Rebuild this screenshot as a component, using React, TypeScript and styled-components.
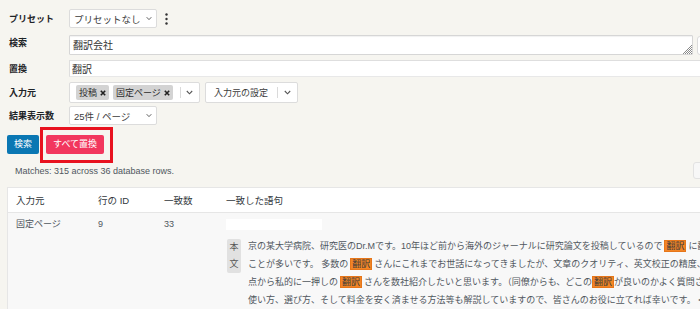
import React from "react";
import styled, { createGlobalStyle } from "styled-components";

const GlobalStyle = createGlobalStyle`
  html, body { margin: 0; padding: 0; background: #f6f5f0; overflow: hidden; }
  body { font-family: "Liberation Sans", "Noto Sans CJK JP", sans-serif; color: #3c434a; }
  * { box-sizing: border-box; }
`;

const Page = styled.div`
  width: 790px;
  padding: 9px 0 0 7px;
  display: flex;
  flex-direction: column;
`;

const Row = styled.div<{ $mt?: number; $h: number }>`
  display: grid;
  grid-template-columns: 62px 1fr;
  grid-template-rows: ${(p) => p.$h}px;
  align-items: center;
  margin-top: ${(p) => p.$mt ?? 0}px;
  height: ${(p) => p.$h}px;
`;

const Label = styled.div<{ $shift?: number }>`
  padding-left: 2px;
  font-size: 9px;
  font-weight: 700;
  color: #1d2327;
  line-height: 12px;
  position: relative;
  top: ${(p) => p.$shift ?? 0}px;
`;

const Field = styled.div<{ $gap?: number; $h: number }>`
  display: flex;
  align-items: center;
  gap: ${(p) => p.$gap ?? 0}px;
  height: ${(p) => p.$h}px;
`;

const SelectBox = styled.div<{ $w: number }>`
  width: ${(p) => p.$w}px;
  height: 100%;
  display: flex;
  align-items: center;
  justify-content: space-between;
  padding: 0 4px 0 4px;
  background: #fff;
  border: 1px solid #dcdcdc;
  border-radius: 2px;
  font-size: 9.5px;
  color: #3c3c3c;
`;

const Kebab = styled.div`
  margin-left: 8px;
  display: flex;
  align-items: center;
`;

const TextAreaWrap = styled.div`
  position: relative;
  width: 624px;
  height: 100%;
`;

const TextArea = styled.textarea`
  display: block;
  width: 100%;
  height: 100%;
  margin: 0;
  resize: none;
  border: 1px solid #d6d6d6;
  border-radius: 1px;
  box-shadow: inset 0 1px 1px rgba(0, 0, 0, 0.06);
  background: #fff;
  font-family: "Liberation Sans", "Noto Sans CJK JP", sans-serif;
  font-size: 10px;
  line-height: 13px;
  color: #333;
  padding: 3px 3px 0;
  overflow: hidden;
  outline: none;
`;

const Grip = styled.svg`
  position: absolute;
  right: 1px;
  bottom: 1px;
`;

const SideBox = styled.div`
  width: 60px;
  height: 19px;
  margin-left: 4px;
  background: #fff;
  border: 1px solid #dcdcdc;
  border-radius: 3px;
`;

const TextInput = styled.input`
  display: block;
  width: 700px;
  height: 100%;
  margin: 0;
  border: 1px solid #dedede;
  border-bottom-color: #e8e8e8;
  background: #fff;
  font-family: "Liberation Sans", "Noto Sans CJK JP", sans-serif;
  font-size: 10px;
  color: #333;
  padding: 0 2px;
  outline: none;
`;

const MultiBox = styled.div<{ $w: number; $pl: number }>`
  width: ${(p) => p.$w}px;
  height: 100%;
  display: flex;
  align-items: center;
  padding-left: ${(p) => p.$pl}px;
  background: #fff;
  border: 1px solid #dcdcdc;
  border-radius: 2px;
  font-size: 9px;
  color: #3c3c3c;
`;

const Tag = styled.span`
  display: inline-flex;
  align-items: center;
  gap: 3px;
  height: 15px;
  padding: 0 3px;
  margin-right: 4px;
  background: #d3d3d3;
  border-radius: 2px;
  font-size: 9px;
  color: #2c2c2c;
`;

const Divider = styled.span<{ $ml: number }>`
  width: 1px;
  height: 11px;
  background: #dadada;
  margin-left: ${(p) => p.$ml}px;
`;

const ChevronSlot = styled.span`
  flex: 1;
  display: flex;
  align-items: center;
  justify-content: center;
`;

const Buttons = styled.div`
  display: flex;
  align-items: center;
  gap: 7px;
  margin-top: 10px;
  height: 19px;
`;

const Button = styled.button<{ $bg: string; $marked?: boolean }>`
  position: relative;
  height: 19px;
  padding: 0 7px;
  border: none;
  border-radius: 2px;
  background: ${(p) => p.$bg};
  color: #fff;
  font-family: "Liberation Sans", "Noto Sans CJK JP", sans-serif;
  font-size: 9px;
  line-height: 19px;
  cursor: pointer;
  &::after {
    content: "";
    display: ${(p) => (p.$marked ? "block" : "none")};
    position: absolute;
    top: -8px;
    left: -6px;
    right: -9px;
    bottom: -9px;
    border: 3px solid #e8121f;
  }
`;

const MatchesRow = styled.div`
  margin-top: 8px;
  height: 17px;
  width: 776px;
  display: flex;
  align-items: center;
  justify-content: space-between;
`;

const MatchesText = styled.span`
  padding-left: 8px;
  font-size: 9px;
  color: #50575e;
`;

const PagerBox = styled.div`
  width: 90px;
  height: 17px;
  background: #f7f7f7;
  border: 1px solid #e2e2e2;
  border-radius: 3px;
`;

const Table = styled.div`
  margin-top: 8px;
  width: 776px;
  background: #fff;
  border: 1px solid #e6e6e6;
  border-right: none;
`;

const Grid = styled.div<{ $head?: boolean }>`
  display: grid;
  grid-template-columns: 82px 66px 62px 1fr;
  background: ${(p) => (p.$head ? "#fff" : "#f8f8f8")};
  border-bottom: ${(p) => (p.$head ? "1px solid #e6e6e6" : "none")};
  height: ${(p) => (p.$head ? "25px" : "auto")};
  align-items: ${(p) => (p.$head ? "center" : "start")};
`;

const HeadCell = styled.div`
  padding: 0 8px;
  font-size: 9.5px;
  color: #32373c;
`;

const Cell = styled.div`
  padding: 5px 8px 0;
  font-size: 9px;
  line-height: 12px;
  color: #50575e;
`;

const PhraseCell = styled.div`
  padding: 6px 0 0 8px;
  overflow: hidden;
`;

const TitleBox = styled.div`
  width: 96px;
  height: 11px;
  background: #fff;
`;

const Content = styled.div`
  margin-top: 7px;
  display: flex;
  gap: 7px;
  align-items: flex-start;
`;

const Badge = styled.div`
  width: 14px;
  height: 34px;
  margin-top: 2px;
  margin-left: 1px;
  background: #e1e1e1;
  border-radius: 2px;
  font-size: 9px;
  line-height: 17px;
  text-align: center;
  color: #555;
`;

const Lines = styled.div`
  font-size: 9px;
  line-height: 18px;
  color: #50575e;
  white-space: nowrap;
`;

const Mark = styled.span<{ $ml?: number; $mr?: number }>`
  background: #f28526;
  color: #3a3a3a;
  padding: 1px 2px;
  margin: 0 ${(p) => p.$mr ?? 2}px 0 ${(p) => p.$ml ?? 2}px;
  box-shadow: inset 0 0 0 1px #e6761a;
`;

const Chevron = ({ w = 7 }: { w?: number }) => (
  <svg width={w} height={5} viewBox="0 0 7 5">
    <polyline points="0.8,1 3.5,3.8 6.2,1" fill="none" stroke="#555" strokeWidth="1.1" />
  </svg>
);

const XIcon = () => (
  <svg width={6} height={6} viewBox="0 0 6 6">
    <path d="M0.8 0.8 L5.2 5.2 M5.2 0.8 L0.8 5.2" stroke="#222" strokeWidth="1.6" />
  </svg>
);

const gripDots: [number, number][] = [];
for (let y = 0; y < 9; y++) {
  for (let x = 0; x < 9; x++) {
    if (x + y >= 8 && (x + y) % 2 === 0) gripDots.push([x, y]);
  }
}

export default function App() {
  return (
    <>
      <GlobalStyle />
      <Page>
        <Row $h={19}>
          <Label>プリセット</Label>
          <Field $h={19}>
            <SelectBox $w={88}>
              <span>プリセットなし</span>
              <Chevron w={6} />
            </SelectBox>
            <Kebab>
              <svg width={3} height={12} viewBox="0 0 3 12">
                <circle cx="1.5" cy="1.5" r="1.2" fill="#333" />
                <circle cx="1.5" cy="6" r="1.2" fill="#333" />
                <circle cx="1.5" cy="10.5" r="1.2" fill="#333" />
              </svg>
            </Kebab>
          </Field>
        </Row>

        <Row $h={20} $mt={7}>
          <Label $shift={-2}>検索</Label>
          <Field $h={20}>
            <TextAreaWrap>
              <TextArea rows={1} readOnly value="翻訳会社" />
              <Grip width={9} height={9} viewBox="0 0 9 9">
                {gripDots.map(([x, y], i) => (
                  <rect key={i} x={x} y={y} width={1} height={1} fill="#8a8a8a" />
                ))}
              </Grip>
            </TextAreaWrap>
            <SideBox />
          </Field>
        </Row>

        <Row $h={17} $mt={5}>
          <Label>置換</Label>
          <Field $h={17}>
            <TextInput readOnly value="翻訳" />
          </Field>
        </Row>

        <Row $h={21} $mt={5}>
          <Label>入力元</Label>
          <Field $gap={5} $h={21}>
            <MultiBox $w={131} $pl={6}>
              <Tag>
                投稿 <XIcon />
              </Tag>
              <Tag>
                固定ページ <XIcon />
              </Tag>
              <Divider $ml={3} />
              <ChevronSlot>
                <Chevron />
              </ChevronSlot>
            </MultiBox>
            <MultiBox $w={93} $pl={8}>
              <span>入力元の設定</span>
              <Divider $ml={9} />
              <ChevronSlot>
                <Chevron />
              </ChevronSlot>
            </MultiBox>
          </Field>
        </Row>

        <Row $h={19} $mt={3}>
          <Label>結果表示数</Label>
          <Field $h={19}>
            <SelectBox $w={88}>
              <span>25件 / ページ</span>
              <Chevron w={6} />
            </SelectBox>
          </Field>
        </Row>

        <Buttons>
          <Button $bg="#0a77b3">検索</Button>
          <Button $bg="#f2375e" $marked>
            すべて置換
          </Button>
        </Buttons>

        <MatchesRow>
          <MatchesText>Matches: 315 across 36 database rows.</MatchesText>
          <PagerBox />
        </MatchesRow>

        <Table>
          <Grid $head>
            <HeadCell>入力元</HeadCell>
            <HeadCell>行の ID</HeadCell>
            <HeadCell>一致数</HeadCell>
            <HeadCell>一致した語句</HeadCell>
          </Grid>
          <Grid>
            <Cell>固定ページ</Cell>
            <Cell>9</Cell>
            <Cell>33</Cell>
            <PhraseCell>
              <TitleBox />
              <Content>
                <Badge>
                  本<br />文
                </Badge>
                <Lines>
                  <div>
                    京の某大学病院、研究医のDr.Mです。10年ほど前から海外のジャーナルに研究論文を投稿しているので<Mark>翻訳</Mark>に翻訳会社を利用する
                  </div>
                  <div>
                    ことが多いです。 多数の<Mark>翻訳</Mark>さんにこれまでお世話になってきましたが、文章のクオリティ、英文校正の精度、価格などの観
                  </div>
                  <div>
                    点から私的に一押しの<Mark>翻訳</Mark>さんを数社紹介したいと思います。（同僚からも、どこの<Mark $ml={0} $mr={0}>翻訳</Mark>が良いのかよく質問されます）
                  </div>
                  <div>
                    使い方、選び方、そして料金を安く済ませる方法等も解説していますので、皆さんのお役に立てれば幸いです。 &lt;!--more--&gt;
                  </div>
                </Lines>
              </Content>
            </PhraseCell>
          </Grid>
        </Table>
      </Page>
    </>
  );
}
